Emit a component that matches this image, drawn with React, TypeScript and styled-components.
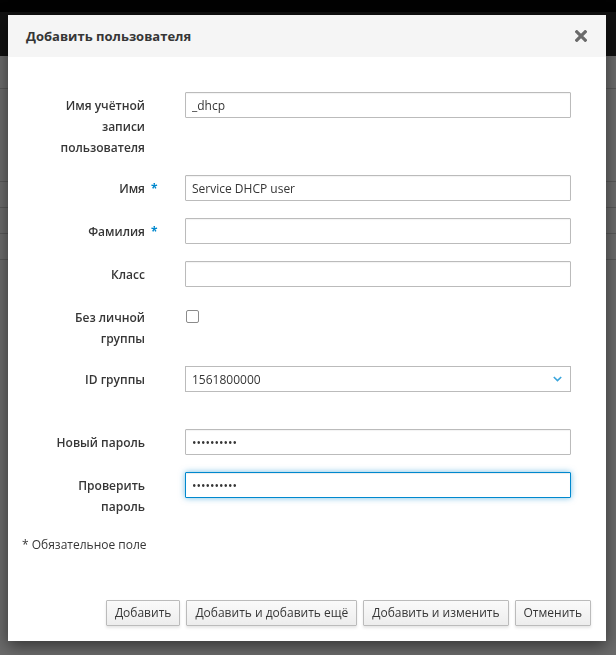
import React from "react";
import styled, { createGlobalStyle } from "styled-components";

const GlobalStyle = createGlobalStyle`
  html, body { margin: 0; padding: 0; height: 100%; background: #ffffff; }
  body { font-family: "Open Sans", "Noto Sans", sans-serif; font-size: 12px; color: #363636; overflow: hidden; }
  #root { height: 100%; }
  * { box-sizing: border-box; }
`;

/* ---------- underlying page ---------- */
const Page = styled.div`
  display: flex;
  flex-direction: column;
  height: 100%;
`;
const Masthead = styled.div`
  height: 12px;
  background: #050505;
`;
const NavBar = styled.div`
  height: 44px;
  background: #292929;
`;
const PageBand = styled.div<{ $h: number }>`
  height: ${(p) => p.$h}px;
  border-bottom: 1px solid #d1d1d1;
  background: #ffffff;
`;
const Backdrop = styled.div`
  position: fixed;
  inset: 0;
  background: rgba(0, 0, 0, 0.58);
`;

/* ---------- dialog ---------- */
const Dialog = styled.div`
  position: absolute;
  top: 15px;
  left: 8px;
  width: 598px;
  height: 626px;
  background: #ffffff;
  box-shadow: 0 5px 15px rgba(0, 0, 0, 0.5);
  display: flex;
  flex-direction: column;
`;
const Header = styled.div`
  height: 42px;
  background: #f5f5f5;
  padding: 0 18px;
  display: flex;
  align-items: center;
  justify-content: space-between;
`;
const Title = styled.h4`
  margin: 0;
  font-size: 13px;
  font-weight: 700;
  color: #363636;
`;
const CloseButton = styled.button`
  border: 0;
  background: none;
  padding: 0;
  margin-right: 1px;
  width: 12px;
  height: 12px;
  display: flex;
  cursor: pointer;
`;
const Body = styled.div`
  flex: 1;
  padding: 35px 35px 0 14px;
`;
const FormRow = styled.div<{ $extra?: number }>`
  display: grid;
  grid-template-columns: 123px 40px 1fr;
  margin-bottom: ${(p) => 17 + (p.$extra ?? 0)}px;
`;
const Label = styled.label`
  padding: 3px 0 0 23px;
  text-align: right;
  line-height: 21px;
  font-size: 12px;
  font-weight: 600;
  color: #363636;
`;
const Star = styled.span`
  padding: 3px 0 0 6px;
  line-height: 21px;
  font-size: 12px;
  font-weight: 700;
  color: #0088ce;
`;
const TextInput = styled.input<{ $focused?: boolean }>`
  display: block;
  width: 100%;
  height: 26px;
  padding: 2px 6px;
  border: 1px solid ${(p) => (p.$focused ? "#0088ce" : "#bbbbbb")};
  border-radius: 1px;
  font-family: "Open Sans", sans-serif;
  font-size: 12px;
  color: #363636;
  background: #ffffff;
  outline: none;
  box-shadow: ${(p) =>
    p.$focused ? "inset 0 1px 1px rgba(3,3,3,.075), 0 0 6px rgba(0,136,206,.55)" : "inset 0 1px 1px rgba(3,3,3,.05)"};
`;
const Check = styled.input`
  appearance: none;
  width: 13px;
  height: 13px;
  margin: 6px 0 0 1px;
  border: 1px solid #8b8b8b;
  border-radius: 2px;
  background: #ffffff;
`;
const SelectBox = styled.div`
  height: 26px;
  padding: 0 8px 0 6px;
  border: 1px solid #bbbbbb;
  display: flex;
  align-items: center;
  justify-content: space-between;
  font-size: 12px;
  color: #363636;
  background: #ffffff;
`;
const Note = styled.div`
  line-height: 21px;
  font-size: 12px;
  color: #363636;
`;
const Footer = styled.div`
  display: flex;
  justify-content: flex-end;
  gap: 6px;
  padding: 0 15px 15px;
`;
const Button = styled.button`
  height: 26px;
  padding: 2px 8px;
  border: 1px solid #bbbbbb;
  border-radius: 1px;
  background: linear-gradient(to bottom, #fafafa 0%, #ededed 100%);
  box-shadow: 0 2px 3px rgba(3, 3, 3, 0.1);
  font-family: "Open Sans", sans-serif;
  font-size: 12px;
  line-height: 20px;
  color: #363636;
  cursor: pointer;
`;

const CloseIcon = () => (
  <svg width="12" height="12" viewBox="0 0 12 12">
    <path d="M1.8 1.8 L10.2 10.2 M10.2 1.8 L1.8 10.2" stroke="#6a6a6a" strokeWidth="3.2" strokeLinecap="square" fill="none" />
  </svg>
);

const Chevron = () => (
  <svg width="9" height="6" viewBox="0 0 9 6">
    <polyline points="0.8,1 4.5,4.6 8.2,1" stroke="#39a5dc" strokeWidth="1.6" fill="none" />
  </svg>
);

const Field = ({ label, required, children, extra }: { label: string; required?: boolean; children: React.ReactNode; extra?: number }) => (
  <FormRow $extra={extra}>
    <Label>{label}</Label>
    <Star>{required ? "*" : ""}</Star>
    <div>{children}</div>
  </FormRow>
);

export default function App() {
  return (
    <>
      <GlobalStyle />
      <Page>
        <Masthead />
        <NavBar />
        <PageBand $h={33} />
        <PageBand $h={93} />
        <PageBand $h={26} />
        <PageBand $h={26} />
        <PageBand $h={26} />
      </Page>
      <Backdrop />
      <Dialog>
        <Header>
          <Title>Добавить пользователя</Title>
          <CloseButton aria-label="Закрыть">
            <CloseIcon />
          </CloseButton>
        </Header>
        <Body>
          <Field label="Имя учётной записи пользователя">
            <TextInput defaultValue="_dhcp" />
          </Field>
          <Field label="Имя" required>
            <TextInput defaultValue="Service DHCP user" />
          </Field>
          <Field label="Фамилия" required>
            <TextInput defaultValue="" />
          </Field>
          <Field label="Класс">
            <TextInput defaultValue="" />
          </Field>
          <Field label="Без личной группы">
            <Check type="checkbox" />
          </Field>
          <Field label="ID группы" extra={20}>
            <SelectBox>
              <span>1561800000</span>
              <Chevron />
            </SelectBox>
          </Field>
          <Field label="Новый пароль">
            <TextInput type="password" defaultValue="0123456789" />
          </Field>
          <Field label="Проверить пароль">
            <TextInput type="password" defaultValue="0123456789" $focused />
          </Field>
          <Note>* Обязательное поле</Note>
        </Body>
        <Footer>
          <Button>Добавить</Button>
          <Button>Добавить и добавить ещё</Button>
          <Button>Добавить и изменить</Button>
          <Button>Отменить</Button>
        </Footer>
      </Dialog>
    </>
  );
}
